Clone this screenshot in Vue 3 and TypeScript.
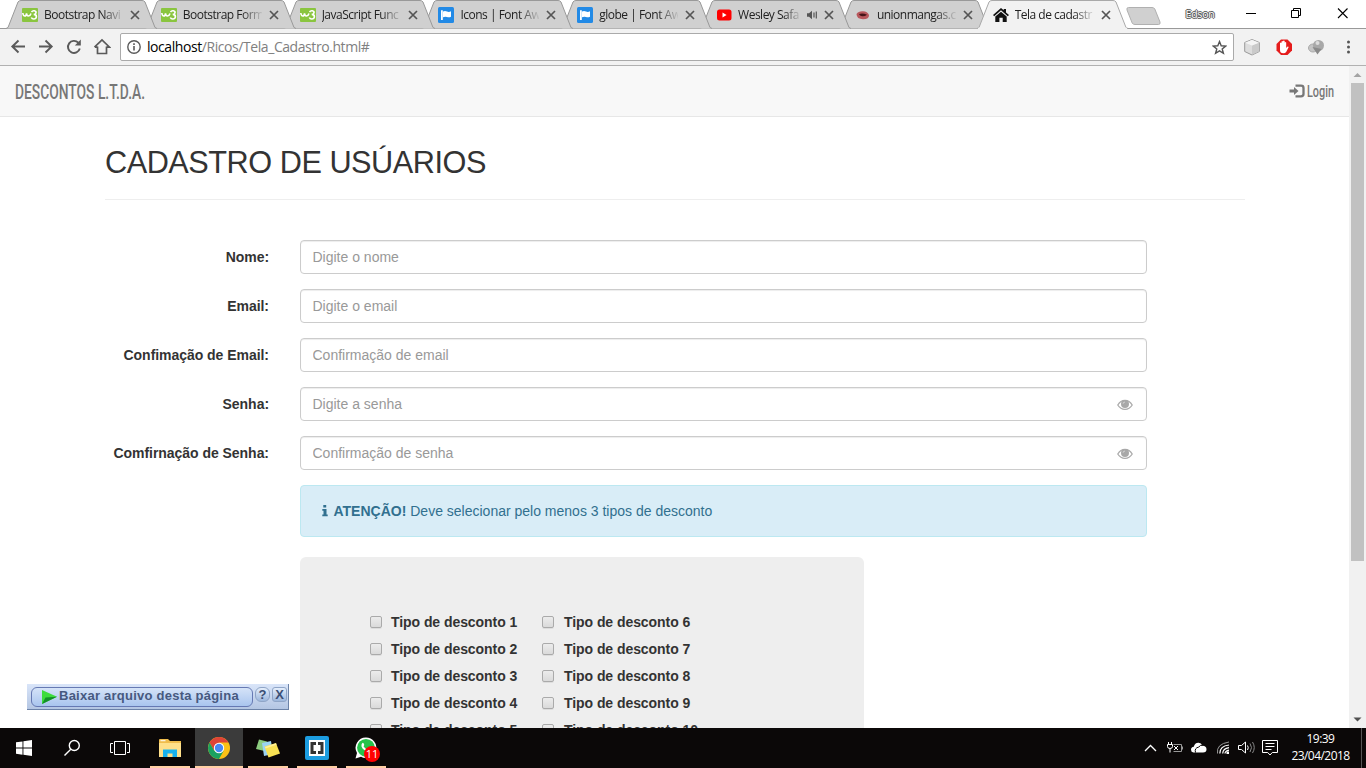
<script setup lang="ts">
interface Tab {
  title: string
  icon: 'w3' | 'fa' | 'yt' | 'um' | 'home'
  sound?: boolean
  active?: boolean
}
interface Field {
  label: string
  placeholder: string
  secret?: boolean
}

const tabs: Tab[] = [
  { title: 'Bootstrap Navi', icon: 'w3' },
  { title: 'Bootstrap Form', icon: 'w3' },
  { title: 'JavaScript Func', icon: 'w3' },
  { title: 'Icons | Font Aw', icon: 'fa' },
  { title: 'globe | Font Aw', icon: 'fa' },
  { title: 'Wesley Safa', icon: 'yt', sound: true },
  { title: 'unionmangas.c', icon: 'um' },
  { title: 'Tela de cadastr', icon: 'home', active: true },
]

const fields: Field[] = [
  { label: 'Nome:', placeholder: 'Digite o nome' },
  { label: 'Email:', placeholder: 'Digite o email' },
  { label: 'Confimação de Email:', placeholder: 'Confirmação de email' },
  { label: 'Senha:', placeholder: 'Digite a senha', secret: true },
  { label: 'Comfirnação de Senha:', placeholder: 'Confirmação de senha', secret: true },
]

const columns: number[][] = [
  [1, 2, 3, 4, 5],
  [6, 7, 8, 9, 10],
]
</script>

<template>
  <div class="screen">
    <header class="tabstrip">
      <div
        v-for="(t, i) in tabs"
        :key="i"
        class="tab"
        :class="{ active: t.active }"
        :style="{ zIndex: t.active ? 20 : 10 - i }"
      >
        <svg class="shape" width="151" height="29" viewBox="0 0 151 29">
          <path d="M0 28.5 L2 27.5 L12 2 Q13 .5 15 .5 H136 Q138 .5 139 2 L149 27.5 L151 28.5" :fill="t.active ? '#f2f2f2' : '#d0d0d0'" :stroke="t.active ? '#a9a9a9' : '#999'" />
          <path v-if="t.active" d="M1 28.5H150" stroke="#f2f2f2" stroke-width="1.4" />
        </svg>
        <svg v-if="t.icon === 'w3'" class="fav" viewBox="0 0 16 16">
          <rect y="1" width="16" height="14" rx="1" fill="#8ac53f" />
          <path d="M.8 6q.4 3 2 3t1.700-2.600q.3 2.600 2 2.600T9 6.500" fill="none" stroke="#fff" stroke-width="1.600" />
          <path d="M9.500 5q1-1.500 2.800-1.200 2 .4 1.700 2-.3 1.500-2.300 1.600 2.700 0 2.700 2.300-.2 2.300-2.700 2.300-1.700 0-2.400-1.500" fill="none" stroke="#fff" stroke-width="1.600" />
        </svg>
        <svg v-else-if="t.icon === 'fa'" class="fav" viewBox="0 0 16 16">
          <rect width="16" height="16" rx="1.500" fill="#228ae6" />
          <path d="M3 3.300h1.800v9.700H3z M5 4.500q2-1 4 0t4-.3v5.600q-2 1-4 .2t-4 .2z" fill="#fff" />
        </svg>
        <svg v-else-if="t.icon === 'yt'" class="fav" viewBox="0 0 16 16">
          <rect x="1" y="2.500" width="14.500" height="11" rx="2.500" fill="#f00" />
          <path d="M6.500 5.600v4.800L10.600 8z" fill="#fff" />
        </svg>
        <svg v-else-if="t.icon === 'um'" class="fav" viewBox="0 0 16 16">
          <path d="M1.500 7q2-3 6.500-2.700t6 3.700q.3 4.200-6 4.200T1.500 7z" fill="#b8575c" />
          <path d="M4 7q4-1.300 8 .8-2.500 1.900-5 1.400T4 7z" fill="#451519" />
        </svg>
        <svg v-else class="fav" viewBox="0 0 16 16">
          <path d="M0 8 8 1l2.700 2.300V2H13v3.400L16 8l-1.200 1.200L8 3.300 1.200 9.200z M2.300 9.500 8 4.700l5.700 4.800V15H9.700v-4.200H6.400V15H2.300z" fill="#111" />
        </svg>
        <span class="title" :class="{ short: t.sound }">{{ t.title }}</span>
        <svg v-if="t.sound" class="snd" width="11" height="10" viewBox="0 0 11 10">
          <path d="M0 3.300h2L5 .8v8.400L2 6.700H0z" fill="#555" />
          <path d="M7 2.500v5M9.300 1.500v7" stroke="#555" stroke-width="1.200" />
        </svg>
        <svg class="x" width="10" height="10" viewBox="0 0 10 10">
          <path d="M1 1l8 8M9 1l-8 8" stroke="#555" stroke-width="1.700" />
        </svg>
      </div>
      <svg class="newtab" width="35" height="18" viewBox="0 0 35 18">
        <path d="M2.500.5H26q2 0 2.800 1.500L34 15q.6 2.500-1.500 2.500H9q-2 0-2.800-1.500L1 3Q.3.500 2.500.5z" fill="#d0d0d0" stroke="#b0b0b0" />
      </svg>
      <span class="user">Edson</span>
      <svg class="win" width="104" height="12" viewBox="0 0 104 12" fill="none" stroke="#000" stroke-width="1">
        <path d="M0 6.500h10" />
        <path d="M45.500 3.500h7v7h-7z M47.500 3V1.500h7v7H53" />
        <path d="M92 1.500l9.500 9.500M101.500 1.500L92 11" stroke-width="1.100" />
      </svg>
    </header>

    <div class="toolbar">
      <svg class="navicons" width="101" height="20" viewBox="0 0 101 20" fill="none" stroke="#5a5a5a" stroke-width="1.900">
        <path d="M15 9.500H2.500M8.500 3.500 2.300 9.500l6.200 6" />
        <path d="M29 9.500h12.500M35.500 3.500l6.200 6-6.200 6" />
        <path d="M68.300 5.700A6 6 0 1 0 69.800 11.500" />
        <path d="M70.800 2.500v6h-6z" fill="#5a5a5a" stroke="none" />
        <path d="M87.500 9.500V16.500h9V9.500M85 10.200h2.500M96.500 10.200H99.500L92 2.900 84.500 10.200" stroke-width="1.700" />
      </svg>
      <div class="omnibox">
        <svg width="14" height="14" viewBox="0 0 14 14">
          <circle cx="7" cy="7" r="6.200" fill="none" stroke="#5a5a5a" stroke-width="1.400" />
          <path d="M7 6v4.500M7 3.300v1.600" stroke="#5a5a5a" stroke-width="1.600" />
        </svg>
        <span class="url"><b>localhost</b>/Ricos/Tela_Cadastro.html#</span>
        <svg class="star" width="15" height="15" viewBox="0 0 15 15">
          <path d="M7.500 1.600l1.700 4.200 4.500.3-3.500 2.800 1.200 4.400-3.900-2.500-3.900 2.500 1.200-4.400L1.300 6.100l4.500-.3z" fill="none" stroke="#555" stroke-width="1.400" />
        </svg>
      </div>
      <svg class="ext" width="112" height="18" viewBox="0 0 112 18">
        <path d="M9 1.500l7.300 3v9L9 17l-7.300-3.500v-9z" fill="#ddd" stroke="#999" />
        <path d="M9 7.500l7-3v9l-7 3.300z" fill="#cacaca" />
        <path d="M9 1.800l7 2.900-7 2.800-7-2.800z" fill="#f4f4f4" />
        <path d="M38 1.500h6.500l4.500 4.500v6.500l-4.500 4.500H38l-4.500-4.500V6z" fill="#e51c1c" />
        <path d="M37 9V5q.8-1 1.500 0v3-4.500q.8-1 1.500 0V8 3q.9-1 1.700 0v5-3.500q.9-1 1.500 0V10l1.400-1.500q1.300 0 1 .8l-2.300 4.500q-1 1.500-3 1.500-3.300 0-3.300-3.300z" fill="#fff" />
        <ellipse cx="70" cy="10" rx="4.500" ry="4" fill="#c4c4c4" stroke="#aaa" />
        <circle cx="75.500" cy="7.500" r="5.500" fill="#a8a8a8" />
        <path d="M69.500 9l9 2-4 5.500z" fill="#8a8a8a" />
        <circle cx="74.500" cy="5" r="2" fill="#dcdcdc" />
        <g fill="#555"><circle cx="105.500" cy="4" r="1.500" /><circle cx="105.500" cy="9" r="1.500" /><circle cx="105.500" cy="14" r="1.500" /></g>
      </svg>
    </div>

    <div class="viewport">
      <div class="page">
        <nav class="navbar">
          <svg width="136" height="30" viewBox="0 0 136 30">
            <text class="oswald" x="0" y="22.500" font-size="20.500" textLength="130" lengthAdjust="spacingAndGlyphs">DESCONTOS L.T.D.A.</text>
          </svg>
          <div class="login">
            <svg width="16" height="14" viewBox="0 0 16 14">
              <path d="M.5 5.600h4.500V3L9.500 7 5 11V8.400H.5z" fill="#777" />
              <path d="M6.500 1.700H12q2.500 0 2.500 2.300v6q0 2.300-2.500 2.300H6.500" fill="none" stroke="#777" stroke-width="2.300" />
            </svg>
            <svg width="28" height="30" viewBox="0 0 28 30">
              <text class="oswald" x="0" y="20.500" font-size="16.500" textLength="27" lengthAdjust="spacingAndGlyphs">Login</text>
            </svg>
          </div>
        </nav>

        <main class="container">
          <h2>CADASTRO DE USÚARIOS</h2>
          <form class="form">
            <div v-for="f in fields" :key="f.label" class="row">
              <label>{{ f.label }}</label>
              <div class="control">
                <input type="text" :placeholder="f.placeholder" />
                <svg v-if="f.secret" class="eye" width="16" height="12" viewBox="0 0 16 12">
                  <path d="M.8 6Q3.500 1.300 8 1.300T15.200 6Q12.500 10.400 8 10.400T.8 6z" fill="none" stroke="#aaa" stroke-width="1.300" />
                  <circle cx="8" cy="5" r="4" fill="#a8a8a8" />
                  <path d="M6.200 4.600Q6.300 3.200 7.800 3.100" fill="none" stroke="#eee" stroke-width=".7" />
                </svg>
              </div>
            </div>
            <div class="alert">
              <svg width="6" height="12" viewBox="0 0 6 12">
                <path d="M1.300 0h2.900v2.500H1.300zM.3 4h4.200v5.600h1.200v1.700H.3V9.600h1.200V5.700H.3z" fill="#31708f" />
              </svg>
              <p><strong>ATENÇÃO!</strong> Deve selecionar pelo menos 3 tipos de desconto</p>
            </div>
            <div class="well">
              <div v-for="(col, c) in columns" :key="c" class="col">
                <label v-for="n in col" :key="n" class="option"><span class="box"></span>Tipo de desconto {{ n }}</label>
              </div>
            </div>
          </form>
        </main>
      </div>
      <div class="scrollbar">
        <svg width="17" height="17" viewBox="0 0 17 17"><path d="M4.500 11L8.500 7l4 4z" fill="#a3a3a3" /></svg>
        <div class="thumb"></div>
        <svg width="17" height="17" viewBox="0 0 17 17"><path d="M4.500 6.500h8l-4 4z" fill="#505050" /></svg>
      </div>

      <div class="popup">
        <div class="download">
          <svg width="15" height="14" viewBox="0 0 15 14">
            <path d="M0 0l15 6.800L0 14z" fill="#3ddc3d" />
            <path d="M0 14l3.500-6.500L15 6.800z" fill="#14902a" />
          </svg>
          <span>Baixar arquivo desta página</span>
        </div>
        <span class="pbtn round">?</span>
        <span class="pbtn">X</span>
      </div>
    </div>

    <footer class="taskbar">
      <div class="task">
        <svg width="16" height="16" viewBox="0 0 16 16" fill="#fff"><path d="M0 2.300l6.500-.9v6.200H0zM7.400 1.200L16 0v7.600H7.400zM0 8.500h6.500v6.200L0 13.800zM7.400 8.500H16V16l-8.600-1.200z" /></svg>
      </div>
      <div class="task">
        <svg width="18" height="18" viewBox="0 0 18 18" fill="none" stroke="#fff" stroke-width="1.400"><circle cx="11.300" cy="6.500" r="5" /><path d="M7.800 10.200L1.500 16.500" /></svg>
      </div>
      <div class="task">
        <svg width="20" height="14" viewBox="0 0 20 14" fill="none" stroke="#fff"><path d="M4.500.5h11v13h-11zM3 2.500H.5v9H3M17 2.500h2.500v9H17" /></svg>
      </div>
      <div class="task open">
        <svg width="22" height="19" viewBox="0 0 22 19">
          <path d="M0 1q0-1 1-1h8l2 2h11v16H0z" fill="#f0bd4d" />
          <path d="M0 4h22v14H0z" fill="#ffe08a" />
          <path d="M4 10.500h14V18h-4.500v-3.500h-5V18H4z" fill="#18b3f0" />
          <path d="M1.500 1.200h5v1h-5z" fill="#fff" />
        </svg>
      </div>
      <div class="task open current">
        <svg width="22" height="22" viewBox="0 0 22 22">
          <circle cx="11" cy="11" r="11" fill="#fbc116" />
          <path d="M1.500 5.500A11 11 0 0 1 20.500 5.500H11L6.300 13.700z" fill="#de4437" />
          <path d="M1.500 5.500A11 11 0 0 0 11 22l4.700-8.300H6.300z" fill="#1ba160" />
          <circle cx="11" cy="11" r="5.200" fill="#fff" /><circle cx="11" cy="11" r="4.200" fill="#4889f4" />
        </svg>
      </div>
      <div class="task open">
        <svg width="24" height="19" viewBox="0 0 24 19">
          <path d="M3 .5l8 2-2.500 9.500L0 10z" fill="#8ccc7f" />
          <path d="M6 4l9-2 2 13-9 2z" fill="#9bd3f3" />
          <path d="M8.500 7.500L20 4l4 10.500L12.500 18.500z" fill="#f9e254" />
          <path d="M9 8L20 4.300l.5 1.500-11 3.700z" fill="#fff09a" />
        </svg>
      </div>
      <div class="task open">
        <svg width="24" height="24" viewBox="0 0 24 24">
          <rect width="24" height="24" rx="2" fill="#1c9ce0" />
          <rect x="4" y="4" width="16" height="16" fill="#fff" />
          <path d="M11 6H5.500v12H11v-3H8.500V9H11zM13 6h5.500v12H13v-3h2.500V9H13z" fill="#333" />
        </svg>
      </div>
      <div class="task open">
        <svg width="22" height="22" viewBox="0 0 22 22">
          <path d="M11 .5a10.300 10.300 0 1 1-5 19.300L.5 21.500 2 16A10.300 10.300 0 0 1 11 .5z" fill="#fff" />
          <circle cx="11" cy="10.800" r="8.900" fill="#25c34b" />
          <path d="M7 6.500q1-1.300 1.700 0l.6 1.600-.8 1.200q1.200 2.200 3.300 3l1.100-1.200 2.100 1q.2 2.200-2.500 2.300-4.200-.7-6-4.900-.3-2 .5-3z" fill="#fff" />
        </svg>
        <span class="badge">11</span>
      </div>

      <svg class="tray" width="136" height="18" viewBox="0 0 136 18" fill="none" stroke="#fff">
        <path d="M1 12l5.500-5.500L12 12" stroke-width="1.300" />
        <path d="M29.500 5.500h8v7h-8M38.500 7.500v3" stroke="#999" />
        <path d="M23.500 5.500h5v2q0 2-2.500 2t-2.500-2zM24.500 3v2M27.500 3v2M26 9.500v4M30 7l4 4M34 7l-4 4" />
        <path d="M49.500 13.500q-2.500-.3-2.500-2.800t2.800-2.900q1-4.300 4.800-4.100 2.700.2 3.800 3.100 4.100.3 4.100 3.500t-3.500 3.200z" fill="#fff" stroke="none" />
        <path d="M51.500 13.500q-1.300-4.500 3.300-5.500 1.500-2.300 4-1.700" stroke="#0b0808" />
        <path d="M75.800 14.500q0-7.500 9.200-8.500M78.700 14.500q.2-5 6.300-5.900M81 14.500q.2-2.500 4-3.300" stroke-width="1.200" />
        <path d="M73.500 14.500Q72 5 85 3" stroke="#999" /><rect x="82.500" y="12.500" width="2.500" height="2.500" fill="#fff" stroke="none" />
        <path d="M94.500 6.500h3l4-3.500v11l-4-3.500h-3zM103.500 6.500q1.500 2.200 0 4.500" /><path d="M106 4.500q3 4 0 8.500M108.500 3q3.500 5.500 0 11" stroke="#888" />
        <path d="M118.500 1.500h15v12h-5.200l-2.300 2.500-2.300-2.500h-5.200zM121.500 4.500h9M121.500 7.500h9M121.500 10.500h6" />
      </svg>
      <div class="clock"><span>19:39</span><span>23/04/2018</span></div>
    </footer>
  </div>
</template>

<style>
body { margin: 0; overflow: hidden; }
</style>

<style scoped>
* { box-sizing: border-box; }
svg { display: block; flex: none; }
.screen { width: 1366px; height: 768px; display: flex; flex-direction: column; overflow: hidden; background: #fff; font-family: "Liberation Sans", Arial, sans-serif; }

.tabstrip { height: 29px; display: flex; align-items: flex-start; padding-left: 6px; flex: none; background: #fff; border-bottom: 1px solid #999; font: 12px "Open Sans", "Noto Sans", sans-serif; }
.tab { position: relative; width: 151px; height: 29px; margin-right: -12.200px; flex: none; display: flex; align-items: center; padding-left: 16px; padding-top: 1px; color: #222; }
.tab.active { margin-left: -1px; }
.shape { position: absolute; left: 0; top: 0; z-index: -1; }
.fav { width: 16px; height: 16px; }
.title { width: 79px; margin: 0 6px; white-space: nowrap; line-height: 18px; letter-spacing: -0.500px; mask-image: linear-gradient(to right, #000 74%, transparent 102%); }
.title.short { width: 62px; }
.snd { margin-right: 5px; margin-left: 1px; }
.x { margin-left: 1px; }
.newtab { margin: 7px 0 0 10px; }
.user { width: 32px; margin: 6px 0 0 25px; font-size: 10.500px; line-height: 16px; letter-spacing: -0.200px; color: #fff; text-shadow: 1px 0 0 #555, -1px 0 0 #555, 0 1px 0 #555, 0 -1px 0 #555, 0 0 2px #999; }
.win { margin: 7px 0 0 28px; }

.toolbar { height: 37px; flex: none; display: flex; align-items: center; background: #f2f2f2; border-bottom: 1px solid #b1b1b1; }
.navicons { margin-left: 10px; }
.omnibox { width: 1114px; height: 28px; margin-left: 9px; display: flex; align-items: center; padding: 0 6px; border: 1px solid #aaa; border-radius: 2px; background: #fff; }
.url { margin-left: 6px; font: 14px/20px "Open Sans", "Noto Sans", sans-serif; letter-spacing: -0.430px; color: #808080; white-space: nowrap; }
.url b { font-weight: 400; color: #000; }
.star { margin-left: auto; }
.ext { margin-left: 9px; }

.viewport { position: relative; height: 662px; flex: none; display: flex; overflow: hidden; }
.page { width: 1349px; height: 662px; overflow: hidden; }
.navbar { height: 51px; display: flex; align-items: center; justify-content: space-between; padding: 0 14px 0 15px; background: #f8f8f8; border-bottom: 1px solid #e7e7e7; }
.oswald { font-family: Roboto, sans-serif; font-weight: 500; fill: #777; }
.login { display: flex; align-items: center; gap: 2px; }
.container { width: 1140px; margin-left: 105px; }
h2 { margin: 0 0 40px; padding: 29px 0 19px; font-size: 30.700px; line-height: 34px; font-weight: 400; color: #333; border-bottom: 1px solid #eee; white-space: nowrap; letter-spacing: -0.480px; }
.row { display: flex; align-items: center; height: 34px; margin-bottom: 15px; }
.row label { width: 164px; text-align: right; font-size: 14px; line-height: 20px; font-weight: 700; color: #333; white-space: nowrap; letter-spacing: -0.040px; }
.control { position: relative; width: 847px; margin-left: 31px; }
input { display: block; width: 100%; height: 34px; padding: 6px 11.500px; font: 14px/20px "Liberation Sans", Arial, sans-serif; color: #555; background: #fff; border: 1px solid #ccc; border-radius: 4px; box-shadow: inset 0 1px 1px rgba(0, 0, 0, .075); }
input::placeholder { color: #999; opacity: 1; }
.eye { position: absolute; right: 14.500px; top: 12px; }
.alert { width: 847px; height: 52px; margin-left: 195px; display: flex; align-items: center; gap: 6px; padding: 0 20.500px; background: #d9edf7; border: 1px solid #bce8f1; border-radius: 4px; color: #31708f; font-size: 14px; }
.alert p { margin: 0; line-height: 20px; }
.well { width: 564px; height: 240px; margin: 20px 0 0 195px; padding: 55px 70px 0; display: flex; background: #eee; border-radius: 6px; }
.col { width: 172px; flex: none; }
.option { height: 27px; display: flex; align-items: flex-start; font-size: 14px; line-height: 20px; font-weight: 700; color: #333; white-space: nowrap; letter-spacing: -0.060px; }
.box { width: 12px; height: 12px; margin: 4px 9px 0 0; flex: none; border: 1px solid #aaa; border-radius: 2px; background: linear-gradient(#ececec, #dadada); box-shadow: 0 1px 0 #ddd; }
.col:nth-child(2) .box { margin-right: 10px; }

.scrollbar { width: 17px; height: 662px; flex: none; background: #f1f1f1; display: flex; flex-direction: column; }
.scrollbar svg:last-child { margin-top: auto; }
.thumb { width: 13px; height: 478px; margin-left: 2px; background: #c1c1c1; }

.popup { position: absolute; left: 27px; top: 618px; width: 262px; height: 26px; display: flex; align-items: flex-start; gap: 2px; padding: 3px 0 0 4px; background: linear-gradient(#d9e5f9, #b4c6e3); border-right: 1px solid #6c83a8; border-bottom: 1px solid #6c83a8; }
.download { width: 222px; height: 20px; display: flex; align-items: center; gap: 2px; padding-left: 10px; border: 1px solid #6679b3; border-radius: 6px; background: linear-gradient(#d5e3f8, #a9c5ee); color: #47597f; font-size: 13px; line-height: 16px; font-weight: 700; white-space: nowrap; letter-spacing: 0.240px; }
.download span { padding-bottom: 2px; }
.pbtn { width: 15px; height: 15px; border-radius: 3px; border: 1px solid #8fa5c7; background: linear-gradient(#e4eefc, #9db7dc); color: #3a4e75; font-size: 13px; line-height: 13px; font-weight: 700; text-align: center; }
.pbtn.round { border-radius: 6px; }

.taskbar { height: 40px; flex: none; display: flex; background: #0b0808; color: #fff; }
.task { position: relative; width: 48px; height: 40px; flex: none; display: flex; align-items: center; justify-content: center; }
.task.open { width: 40px; margin-right: 9px; border-bottom: 2px solid #ffcfa4; padding-top: 2px; }
.task:nth-child(4) { margin-left: 6px; margin-right: 5px; }
.task.current { width: 48px; margin-right: 5px; background: #3b3b3b; }
.badge { position: absolute; left: 18px; top: 18px; width: 16px; height: 16px; border-radius: 50%; background: #f00; font: 11px/16px "Open Sans", sans-serif; text-align: center; }
.tray { margin: 11px 0 0 auto; }
.clock { width: 82px; padding-top: 2px; display: flex; flex-direction: column; align-items: center; font: 12px/17px "Open Sans", "Noto Sans", sans-serif; letter-spacing: -0.550px; border-right: 1px solid #555; margin-right: 4px; }
</style>
